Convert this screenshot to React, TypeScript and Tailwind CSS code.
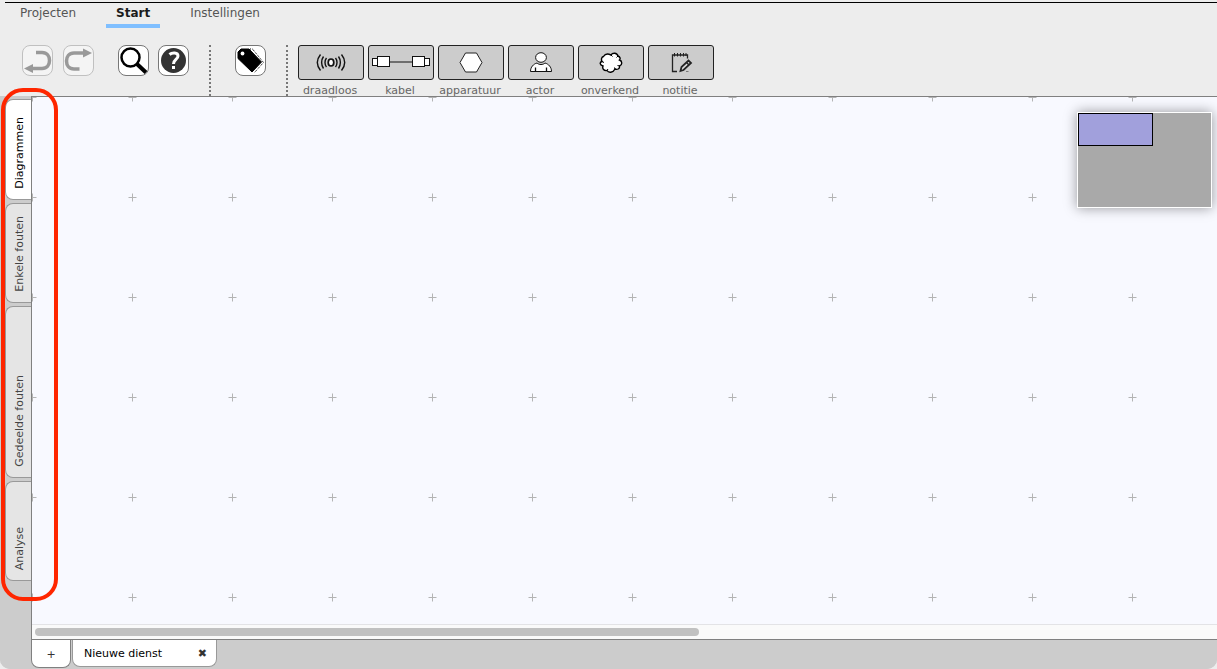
import { useState } from 'react'
import type { ReactNode } from 'react'

interface item {
  id: string,
  title: string,
}

interface tool extends item {
  icon: ReactNode
}

interface sideTab extends item {
  className: string
}

const menuItems: Array<item> = [
  { id: 'projects', title: 'Projecten' },
  { id: 'home', title: 'Start' },
  { id: 'settings', title: 'Instellingen' },
]

const sideTabs: Array<sideTab> = [
  { id: 'diagrams', title: 'Diagrammen', className: 'h-[101px]' },
  { id: 'single', title: 'Enkele fouten', className: 'h-[100px]' },
  { id: 'common', title: 'Gedeelde fouten', className: 'h-[172px]' },
  { id: 'analysis', title: 'Analyse', className: 'h-[100px]' },
]

const WirelessIcon = () => (
  <svg width="30" height="20" viewBox="0 0 30 20" fill="none" stroke="#111">
    <ellipse cx="15" cy="9.5" rx="2.8" ry="3.5" fill="#fff" strokeWidth="1.7" />
    <path d="M10.5 5C8.5 7.5 8.5 11.5 10.5 14M19.5 5C21.5 7.5 21.5 11.5 19.5 14" strokeWidth="1.4" />
    <path d="M7.5 3.5C5 7 5 12 7.5 15.5M22.5 3.5C25 7 25 12 22.5 15.5" strokeWidth="1.4" />
    <path d="M4.5 1.5C.5 6.5 .5 12.5 4.5 17.5M25.5 1.5C29.5 6.5 29.5 12.5 25.5 17.5" strokeWidth="1.4" />
  </svg>
)

const CableIcon = () => (
  <svg width="60" height="15" viewBox="0 0 60 15" fill="#fff" stroke="#111">
    <path d="M18 7H42" stroke="#444" strokeWidth="1.4" />
    <rect x="1.5" y="3.5" width="5" height="7" />
    <rect x="6.5" y="1.5" width="12" height="10" />
    <rect x="53.5" y="3.5" width="5" height="7" />
    <rect x="41.5" y="1.5" width="12" height="10" />
  </svg>
)

const DeviceIcon = () => (
  <svg width="26" height="22" viewBox="0 0 26 22" fill="#fff" stroke="#222">
    <path d="M2 10.5L7.5 1H18.5L24 10.5L18.5 20H7.5Z" />
  </svg>
)

const ActorIcon = () => (
  <svg width="24" height="22" viewBox="0 0 24 22" fill="#fff" stroke="#111">
    <path d="M1.5 19.5C1.5 15 4.5 12 8 11C10 13 14 13 16 11C19.5 12 22.5 15 22.5 19.5Z" />
    <path d="M6.5 19V15.5M17.5 19V15.5" strokeWidth="1.3" />
    <ellipse cx="12" cy="5.5" rx="5.4" ry="4.8" />
  </svg>
)

const CloudIcon = () => (
  <svg width="24" height="22" viewBox="0 0 24 22" fill="#fff" stroke="#000" strokeWidth="1.4">
    <path d="M4.5 4.5C6 2 9 1.500 12 3C13.5 .5 18 .5 19 4C21.5 5 21.500 7 20.500 8C23.500 9 23.500 13 20.500 14C21 17 18 18 16 17C14 21 9.500 21 8 18.500C5 19 3 17 4 14C.5 13 .5 10 3 9.500C2 7.500 2.500 5 4.500 4.500Z" />
    <path d="M12 3L13.5 4.500M19 4L17.500 5.500M20.500 14L18.500 13.500M8 18.500L9 17M3 9.500L5 10.500M16 17L15.500 15.500" strokeWidth="1" />
  </svg>
)

const NoteIcon = () => (
  <svg width="24" height="22" viewBox="0 0 24 22" fill="none" stroke="#222">
    <path d="M8 19.5H3.5V3H18.500V6.500" strokeWidth="1.3" />
    <path d="M5.5 1V4.500M8.500 1V4.500M11.500 1V4.500M14.500 1V4.500M17 1V4" />
    <path d="M11.500 19L12.500 15L19.500 8.500L22 11L14.500 18Z" fill="#ddd" strokeWidth="1.8" />
    <path d="M17.500 10.500L20 13" strokeWidth="1.4" />
    <path d="M17 19.500H19.500" stroke="#777" />
  </svg>
)

const tools: Array<tool> = [
  { id: 'wireless', title: 'draadloos', icon: <WirelessIcon /> },
  { id: 'cable', title: 'kabel', icon: <CableIcon /> },
  { id: 'device', title: 'apparatuur', icon: <DeviceIcon /> },
  { id: 'actor', title: 'actor', icon: <ActorIcon /> },
  { id: 'unknown', title: 'onverkend', icon: <CloudIcon /> },
  { id: 'note', title: 'notitie', icon: <NoteIcon /> },
]

interface iconButtonProps {
  label: string,
  disabled?: boolean,
  children: ReactNode
}

const IconButton = ({ label, disabled, children }: iconButtonProps) => (
  <button
    type="button"
    aria-label={label}
    disabled={disabled}
    className="flex size-[31px] shrink-0 items-center justify-center rounded-lg border border-[#777] bg-white disabled:border-[#c0c0c0] disabled:bg-[#f4f4f4]"
  >
    {children}
  </button>
)

const Separator = () => (
  <div className="h-[51px] border-l-2 border-dotted border-[#777]" />
)

const Menu = () => {
  const [active, setActive] = useState<string>('home')

  return (
    <nav className="ml-[5px] flex gap-5 border-t border-black pl-[5px]">
      {menuItems.map(m => (
        <button
          key={m.id}
          type="button"
          onClick={() => setActive(m.id)}
          className={`h-[25px] border-b-4 px-[10px] pb-[2px] text-xs leading-4 ${active === m.id ? 'border-[#80bfff] font-bold text-[#1c1c1c]' : 'border-transparent text-[#555]'}`}
        >
          {m.title}
        </button>
      ))}
    </nav>
  )
}

const Toolbar = () => (
  <div className="flex items-start pt-[17px] pl-[22px]">
    <div className="flex gap-[10px]">
      <IconButton label="Ongedaan maken" disabled>
        <svg width="29" height="29" viewBox="0 0 29 29" fill="none">
          <path d="M13 6.5H19C24 6.5 26.500 10 26.500 14.500S24 22.500 19 22.500H9" stroke="#999" strokeWidth="3.5" />
          <path d="M1 22.500L10 18V27Z" fill="#999" />
        </svg>
      </IconButton>
      <IconButton label="Opnieuw" disabled>
        <svg width="29" height="29" viewBox="0 0 29 29" fill="none">
          <path d="M15.500 23H10C5 23 2.500 19.500 2.500 15S5 7 10 7H20" stroke="#999" strokeWidth="3.5" />
          <path d="M28 7L19 2.500V11.500Z" fill="#999" />
        </svg>
      </IconButton>
    </div>
    <div className="mr-5 ml-6 flex gap-[9px]">
      <IconButton label="Zoeken">
        <svg width="29" height="29" viewBox="0 0 29 29" fill="none" stroke="#000">
          <circle cx="11.500" cy="11.500" r="9" strokeWidth="2.500" />
          <path d="M18 18L27 26.500" strokeWidth="4" />
        </svg>
      </IconButton>
      <IconButton label="Help">
        <svg width="29" height="29" viewBox="0 0 29 29" fill="none">
          <circle cx="14.500" cy="14.500" r="12.500" fill="#333" />
          <path d="M10.500 8.500C13 6.300 19 6 19 10C19 13.500 14.500 13.500 14.500 18" stroke="#fff" strokeWidth="3" />
          <path d="M13 20H16V23H13Z" fill="#fff" />
        </svg>
      </IconButton>
    </div>
    <Separator />
    <div className="mr-5 ml-6 flex">
      <IconButton label="Labels">
        <svg width="29" height="29" viewBox="0 0 29 29">
          <path d="M14 3H16.500L27.500 16.500L18.500 26.500" fill="none" stroke="#000" strokeDasharray="1 1" />
          <path d="M5 3H13L25.500 16L16 26L2 12.500V6Z" fill="#000" stroke="#000" strokeLinejoin="round" />
          <circle cx="6.500" cy="7.500" r="1.900" fill="#fff" />
        </svg>
      </IconButton>
    </div>
    <Separator />
    <div className="ml-[10px] flex gap-1">
      {tools.map(t => (
        <div key={t.id} className="flex w-[66px] flex-col items-center gap-[5px]">
          <button
            type="button"
            aria-labelledby={`tool-${t.id}`}
            className="flex h-[35px] w-full items-center justify-center rounded-[3px] border border-[#222] bg-[#ccc]"
          >
            {t.icon}
          </button>
          <span id={`tool-${t.id}`} className="pr-[2px] text-[11px] leading-[12px] text-[#666]">{t.title}</span>
        </div>
      ))}
    </div>
  </div>
)

const SideTabs = () => {
  const [active, setActive] = useState<string>('diagrams')

  return (
    <aside className="flex w-[31px] shrink-0 flex-col gap-[3px] bg-[#ccc] pt-[3px] pl-[5px]">
      {sideTabs.map(t => (
        <button
          key={t.id}
          type="button"
          onClick={() => setActive(t.id)}
          className={`flex w-[26px] items-end justify-center rounded-l-lg border border-r-0 border-[#999] pb-[10px] pl-[2px] text-[11px] leading-4 ${t.className} ${active === t.id ? 'bg-white text-black' : 'bg-[#e5e5e5] text-[#444]'}`}
        >
          <span className="rotate-180 [writing-mode:vertical-rl]">{t.title}</span>
        </button>
      ))}
    </aside>
  )
}

const Workspace = () => (
  <main className="relative min-h-0 flex-1 bg-[#f8f9ff]">
    <svg className="block size-full" aria-hidden="true">
      <defs>
        <pattern id="grid" x="-50" y="-50" width="100" height="100" patternUnits="userSpaceOnUse">
          <path d="M46.5 50.5H54.5M50.5 46.5V54.5" stroke="#b4b4b4" />
        </pattern>
      </defs>
      <rect width="100%" height="100%" fill="url(#grid)" />
    </svg>
    <div className="absolute top-[15px] right-[5px] h-24 w-[135px] border border-white bg-[#a9a9a9] shadow-[0_0_12px_rgba(0,0,0,0.4)]">
      <div className="h-[33px] w-[75px] border border-black bg-[#a1a0dc]" />
    </div>
  </main>
)

const DocumentTabs = () => (
  <footer className="flex h-[29px] shrink-0 items-start gap-px bg-[#ccc]">
    <button
      type="button"
      aria-label="Nieuw tabblad"
      className="h-7 w-10 rounded-b-lg border border-t-0 border-[#808080] bg-white pt-[2px] text-[11px] leading-4 text-[#333]"
    >
      +
    </button>
    <div className="flex h-[27px] w-[145px] items-center justify-between rounded-b-lg border border-t-0 border-[#999] bg-white pt-px pr-[9px] pl-[11px]">
      <button type="button" className="text-[11px] leading-4 text-black">Nieuwe dienst</button>
      <button type="button" aria-label="Sluiten" className="text-[11px] leading-4 text-[#333]">✖</button>
    </div>
  </footer>
)

const App = () => (
  <div className="relative flex h-screen flex-col bg-[#ededed] font-['DejaVu_Sans',Verdana,sans-serif]">
    <header className="h-24 shrink-0 pt-[2px]">
      <Menu />
      <Toolbar />
    </header>

    <div className="flex min-h-0 flex-1 overflow-hidden rounded-b-[10px] bg-[#ccc]">
      <SideTabs />
      <div className="flex min-w-0 flex-1 flex-col">
        <div className="flex min-h-0 flex-1 flex-col border-y border-l border-[#808080]">
          <Workspace />
          <div className="h-[15px] shrink-0 border-t border-[#e3e3e6] bg-[#fafafa] px-[3px] pt-[3px]">
            <div className="h-2 w-[56.3%] rounded-full bg-[#c1c1c1]" />
          </div>
        </div>
        <DocumentTabs />
      </div>
    </div>

    <div className="pointer-events-none absolute top-[88px] left-px h-[513px] w-[57px] rounded-[22px] border-4 border-[#ff2600]" />
  </div>
)

export default App
